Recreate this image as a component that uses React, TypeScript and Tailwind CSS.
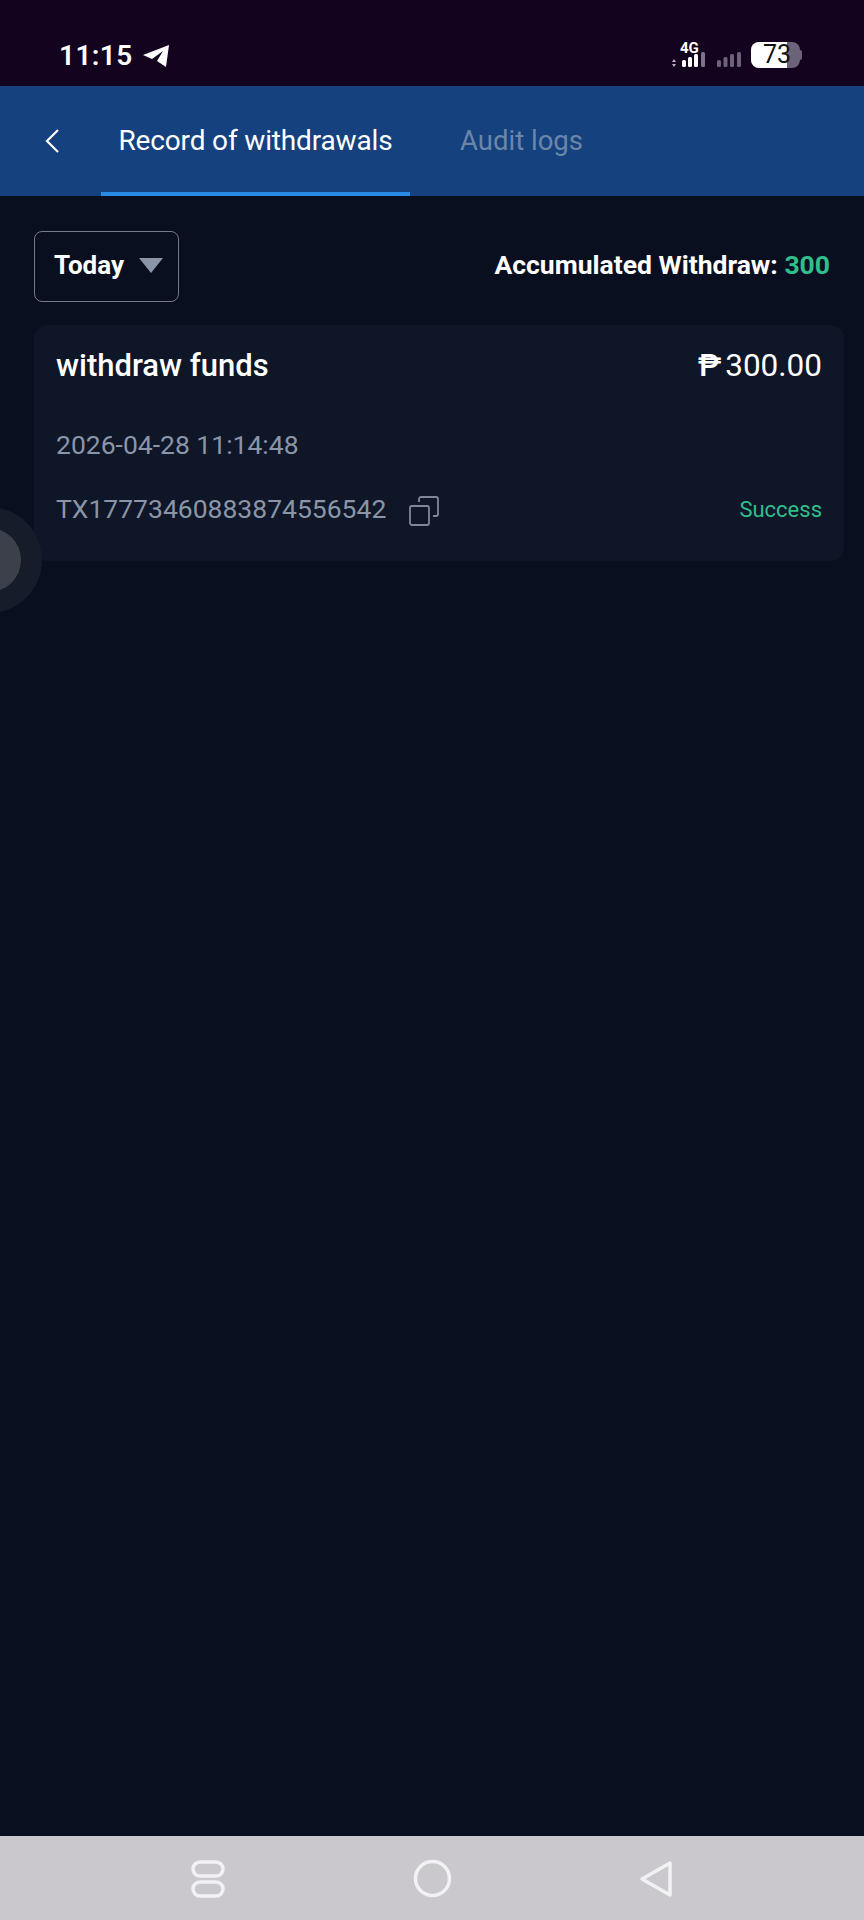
import React from "react";

function StatusBar() {
  return (
    <div className="h-[86px] bg-[#13031e] flex items-start justify-between pl-[59px] pr-[62px] pt-[38px]">
      <div className="flex items-center gap-[9px] h-[20px] mt-[8px]">
        <span className="text-[28px] leading-[20px] font-semibold text-white tracking-[0.4px]">11:15</span>
        <svg width="28" height="24" viewBox="0 0 28 24" fill="#fff">
          <path d="M1 11 L27 1 L24 23 L15 17 L21 7 L10 15 Z" />
        </svg>
      </div>
      <div className="flex items-center h-[28px] mt-[3px]">
        <div className="relative w-[34px] h-[24px] mr-[11px] mt-[8px]">
          <span className="absolute left-[8px] -top-[6px] text-[15px] leading-[14px] font-bold text-white">4G</span>
          <svg className="absolute left-0 top-0" width="34" height="24" viewBox="0 0 34 24">
            <path d="M0 15 L2 12 L4 15 Z M0 17 L4 17 L2 20 Z" fill="#b9b3c0" />
            <rect x="10" y="13" width="4" height="7" rx="1.5" fill="#fff" />
            <rect x="16" y="10" width="4" height="10" rx="1.5" fill="#fff" />
            <rect x="22" y="7" width="4" height="13" rx="1.5" fill="#fff" />
            <rect x="29" y="5" width="4" height="15" rx="1.5" fill="#7d7388" />
          </svg>
        </div>
        <svg className="mr-[10px] mt-[8px]" width="24" height="24" viewBox="0 0 24 24">
          <rect x="0" y="13" width="4" height="7" rx="1.5" fill="#6d6378" />
          <rect x="6.5" y="10" width="4" height="10" rx="1.5" fill="#6d6378" />
          <rect x="13" y="7" width="4" height="13" rx="1.5" fill="#6d6378" />
          <rect x="20" y="5" width="4" height="15" rx="1.5" fill="#6d6378" />
        </svg>
        <div className="relative flex items-center">
          <div className="w-[49px] h-[26px] bg-[#6d6378] rounded-[8px] overflow-hidden">
            <div className="w-[36px] h-full bg-white" />
          </div>
          <div className="w-[2px] h-[10px] bg-[#6d6378] rounded-r-[2px]" />
          <span className="absolute left-[12px] top-0 h-[26px] leading-[26px] text-[25px] text-[#111]">73</span>
        </div>
      </div>
    </div>
  );
}

function Header() {
  return (
    <div className="h-[110px] bg-[#15417f] flex items-stretch pl-[45px]">
      <div className="flex items-center w-[56px]">
        <svg width="16" height="26" viewBox="0 0 16 26" fill="none" stroke="#fff" strokeWidth="2.2">
          <path d="M13 2 L2 13 L13 24" />
        </svg>
      </div>
      <div className="w-[309px] border-b-[4px] border-[#2a8be6] flex justify-center items-center pt-[4px]">
        <span className="text-[28px] text-white tracking-[-0.15px]">Record of withdrawals</span>
      </div>
      <div className="ml-[50px] flex items-center">
        <span className="text-[27.5px] text-[#6b86a8]">Audit logs</span>
      </div>
    </div>
  );
}

function RecordCard() {
  return (
    <div className="mt-[23px] mr-[20px] h-[236px] rounded-[14px] bg-[#0f1627] px-[22px] flex flex-col">
      <div className="flex justify-between items-center mt-[23px] h-[36px]">
        <span className="text-[31px] font-medium text-white">withdraw funds</span>
        <span className="flex items-center gap-[4px] text-[31.5px] text-white">
          <span className="font-medium">₱</span>300.00
        </span>
      </div>
      <div className="mt-[45px] text-[26.5px] leading-[32px] text-[#8b95a8]">2026-04-28 11:14:48</div>
      <div className="mt-[32px] flex items-center justify-between h-[32px]">
        <div className="flex items-center gap-[23px]">
          <span className="text-[26.5px] text-[#8b95a8]">TX17773460883874556542</span>
          <svg className="mt-[3px]" width="30" height="30" viewBox="0 0 30 30" fill="none" stroke="#7f889a" strokeWidth="1.8">
            <rect x="1" y="10" width="19" height="19" rx="2" />
            <path d="M10 6 V3 a2 2 0 0 1 2-2 h15 a2 2 0 0 1 2 2 v15 a2 2 0 0 1-2 2 h-3" />
          </svg>
        </div>
        <span className="text-[22px] text-[#2fbf8b]">Success</span>
      </div>
    </div>
  );
}

function NavBar() {
  return (
    <div className="h-[84px] bg-[#cac8cd] flex items-center gap-[187px] pl-[190px] pt-[1px]">
      <svg width="36" height="38" viewBox="0 0 36 38" fill="none" stroke="#f2f2f4" strokeWidth="3.5">
        <rect x="3" y="2" width="30" height="14" rx="7" />
        <rect x="3" y="22" width="30" height="14" rx="7" />
      </svg>
      <svg width="39" height="39" viewBox="0 0 39 39" fill="none" stroke="#f2f2f4" strokeWidth="3.5">
        <circle cx="19.5" cy="19.5" r="17" />
      </svg>
      <svg width="34" height="38" viewBox="0 0 34 38" fill="none" stroke="#f2f2f4" strokeWidth="3.5" strokeLinejoin="round">
        <path d="M3 19 L31 3 V35 Z" />
      </svg>
    </div>
  );
}

export default function App() {
  return (
    <div className="relative h-[1920px] flex flex-col overflow-hidden bg-[#0a0f20] font-['Roboto',sans-serif]">
      <StatusBar />
      <Header />
      <div className="flex-1 pl-[34px] pt-[35px]">
        <div className="flex items-center justify-between pr-[34px]">
          <div className="w-[145px] h-[71px] rounded-[8px] border-[1.5px] border-[#727a8c] flex items-center pl-[19px] gap-[15px]">
            <span className="text-[26px] font-bold text-white -mt-[2px]">Today</span>
            <span className="-mt-[2px] w-0 h-0 border-l-[12px] border-r-[12px] border-t-[15px] border-l-transparent border-r-transparent border-t-[#8b95a8]" />
          </div>
          <div className="text-[26.5px] font-bold text-white -mt-[4px]">
            Accumulated Withdraw: <span className="text-[#2fbf8b]">300</span>
          </div>
        </div>
        <RecordCard />
      </div>
      <NavBar />
      {/* floating assist ball, half off screen */}
      <div className="absolute -left-[11px] top-[507px] w-[53px] h-[106px] rounded-r-[53px] bg-[#161c2a] flex items-center">
        <div className="w-[32px] h-[64px] rounded-r-[32px] bg-[#3b404b]" />
      </div>
    </div>
  );
}
